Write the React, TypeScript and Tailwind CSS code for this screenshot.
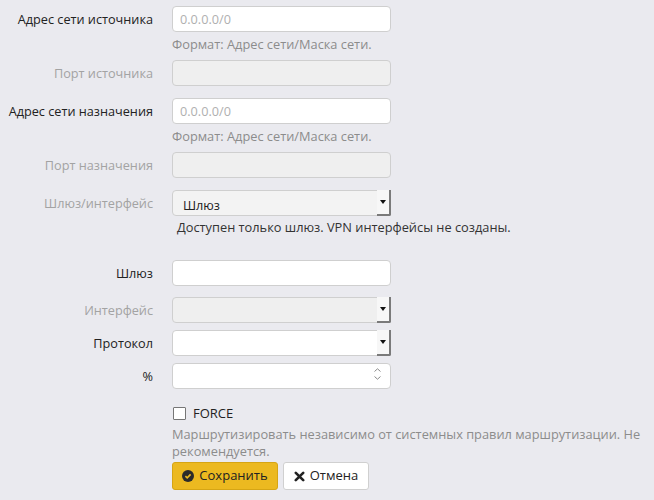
import React from 'react';

/* ─── small pieces ───────────────────────────────────────────────────── */
function Label({ children, muted }: { children: React.ReactNode; muted?: boolean }) {
  return (
    <div
      className={`w-[153px] shrink-0 text-right text-[12.7px] h-[26px] leading-[26px] whitespace-nowrap ${
        muted ? 'text-[#a3a3a3]' : 'text-[#222]'
      }`}
    >
      {children}
    </div>
  );
}

function TextInput({ placeholder, disabled }: { placeholder?: string; disabled?: boolean }) {
  return (
    <input
      type="text"
      disabled={disabled}
      placeholder={placeholder}
      className={`block w-[219px] h-[26px] rounded-[4px] border border-[#cfcfcf] px-[7px] text-[12.7px] text-[#333] placeholder:text-[#b0b0b0] outline-none ${
        disabled ? 'bg-[#efefef]' : 'bg-white'
      }`}
    />
  );
}

function SelectBox({ value, disabled }: { value?: string; disabled?: boolean }) {
  return (
    <div
      className={`relative w-[219px] h-[26px] rounded-[4px] border border-[#cfcfcf] ${
        disabled ? 'bg-[#efefef]' : value ? 'bg-[#f3f3f3]' : 'bg-white'
      }`}
    >
      <div className="pl-[10px] pt-[4px] leading-[20px] text-[12.7px] text-[#222]">{value}</div>
      {/* dropdown arrow */}
      <span className="absolute right-[-1px] top-[-1px] w-[14px] h-[26px] bg-[#f7f7f7] border-r-[2px] border-b-[2px] border-[#7a7a7a] rounded-br-[2px] flex items-center justify-center">
        <svg width="6" height="4" viewBox="0 0 6 4">
          <path d="M0 0h6L3 4z" fill="#111" />
        </svg>
      </span>
    </div>
  );
}

function NumberBox() {
  return (
    <div className="relative w-[219px] h-[26px] rounded-[4px] border border-[#cfcfcf] bg-white">
      <span className="absolute right-[9px] top-[4px] flex flex-col gap-[4px]">
        <svg width="7" height="4" viewBox="0 0 7 4">
          <path d="M0.5 3.5L3.5 0.8L6.5 3.5" fill="none" stroke="#8a8a8a" strokeWidth="1" />
        </svg>
        <svg width="7" height="4" viewBox="0 0 7 4">
          <path d="M0.5 0.5L3.5 3.2L6.5 0.5" fill="none" stroke="#8a8a8a" strokeWidth="1" />
        </svg>
      </span>
    </div>
  );
}

function Help({ children }: { children: React.ReactNode }) {
  return <p className="mt-[4px] leading-[17px] text-[#8c8c8c] whitespace-nowrap">{children}</p>;
}

/* ─── page ───────────────────────────────────────────────────────────── */
export default function App() {
  return (
    <div
      className="min-h-[500px] w-[654px] bg-[#eaeaef] text-[12.8px] pt-[6px]"
      style={{ fontFamily: '"Open Sans", "DejaVu Sans", sans-serif' }}
    >
      <div className="flex flex-col">
        {/* source network */}
        <div className="flex gap-[19px]">
          <Label>Адрес сети источника</Label>
          <div>
            <TextInput placeholder="0.0.0.0/0" />
            <Help>Формат: Адрес сети/Маска сети.</Help>
          </div>
        </div>

        <div className="flex gap-[19px] mt-[7px]">
          <Label muted>Порт источника</Label>
          <TextInput disabled />
        </div>

        {/* destination network */}
        <div className="flex gap-[19px] mt-[12px]">
          <Label>Адрес сети назначения</Label>
          <div>
            <TextInput placeholder="0.0.0.0/0" />
            <Help>Формат: Адрес сети/Маска сети.</Help>
          </div>
        </div>

        <div className="flex gap-[19px] mt-[7px]">
          <Label muted>Порт назначения</Label>
          <TextInput disabled />
        </div>

        {/* gateway / interface */}
        <div className="flex gap-[19px] mt-[12px]">
          <Label muted>Шлюз/интерфейс</Label>
          <div>
            <SelectBox value="Шлюз" />
            <p className="mt-[3px] pl-[5px] leading-[17px] text-[#333] whitespace-nowrap">
              Доступен только шлюз. VPN интерфейсы не созданы.
            </p>
          </div>
        </div>

        <div className="flex gap-[19px] mt-[24px]">
          <Label>Шлюз</Label>
          <TextInput />
        </div>

        <div className="flex gap-[19px] mt-[11px]">
          <Label muted>Интерфейс</Label>
          <SelectBox disabled />
        </div>

        <div className="flex gap-[19px] mt-[7px]">
          <Label>Протокол</Label>
          <SelectBox />
        </div>

        <div className="flex gap-[19px] mt-[7px]">
          <Label>%</Label>
          <NumberBox />
        </div>

        {/* force */}
        <div className="flex gap-[19px] mt-[16px]">
          <div className="w-[153px] shrink-0" />
          <div className="w-[480px]">
            <label className="flex items-center gap-[7px] h-[17px] text-[13px] text-[#222]">
              <span className="ml-[1px] w-[13px] h-[13px] border border-[#767676] bg-white rounded-[1px]" />
              FORCE
            </label>
            <p className="mt-[4px] leading-[17px] text-[#8c8c8c]">
              Маршрутизировать независимо от системных правил маршрутизации. Не рекомендуется.
            </p>

            <div className="flex gap-[5px] mt-[2px]">
              <button className="flex items-center gap-[5px] h-[28px] w-[106px] justify-center rounded-[3px] border border-[#d6a514] bg-[#ecb920] text-[13px] text-[#222]">
                <svg width="12" height="12" viewBox="0 0 12 12">
                  <circle cx="6" cy="6" r="6" fill="#2b2b2b" />
                  <path d="M3.4 6.2L5.2 7.9L8.6 4.4" fill="none" stroke="#ecb920" strokeWidth="1.6" />
                </svg>
                Сохранить
              </button>
              <button className="flex items-center gap-[5px] h-[28px] w-[86px] justify-center rounded-[3px] border border-[#d0d0d0] bg-white text-[13px] text-[#222]">
                <svg width="11" height="11" viewBox="0 0 11 11">
                  <path d="M1.8 1.8L9.2 9.2M9.2 1.8L1.8 9.2" stroke="#222" strokeWidth="2.6" strokeLinecap="round" />
                </svg>
                Отмена
              </button>
            </div>
          </div>
        </div>
      </div>
    </div>
  );
}
